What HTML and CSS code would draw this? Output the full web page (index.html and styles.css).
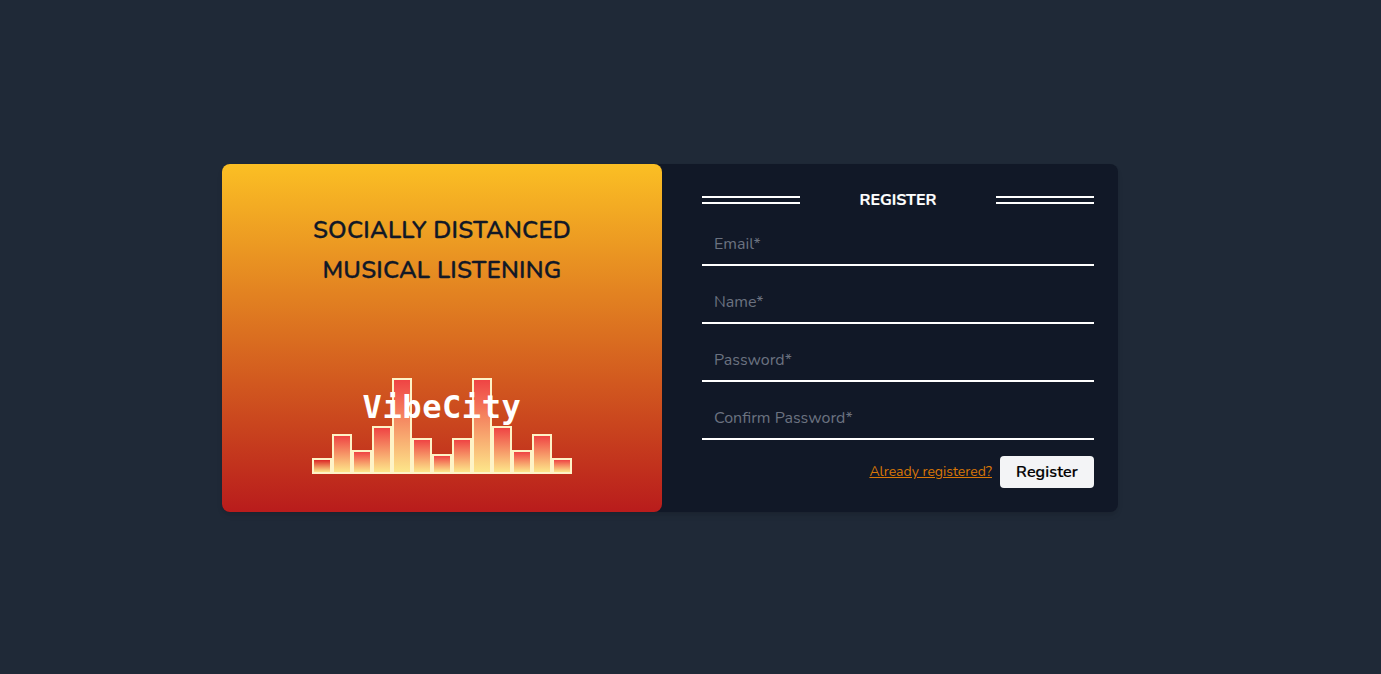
FILE: index.html
```html
<!DOCTYPE html>
<html lang="en">
<head>
<meta charset="utf-8">
<title>VibeCity - Register</title>
<link rel="stylesheet" href="styles.css">
</head>
<body>
<main class="card">
  <section class="promo">
    <h1 class="tagline">SOCIALLY DISTANCED<br>MUSICAL LISTENING</h1>
    <div class="logo">
      <div class="bars">
        <i class="bar h4 deep"></i><i class="bar h10"></i><i class="bar h6"></i><i class="bar h12"></i><i class="bar h24"></i><i class="bar h9"></i><i class="bar h5"></i><i class="bar h9"></i><i class="bar h24"></i><i class="bar h12"></i><i class="bar h6"></i><i class="bar h10"></i><i class="bar h4"></i>
      </div>
      <span class="brand">VibeCity</span>
    </div>
  </section>
  <form class="form">
    <div class="heading"><span class="rule"></span><h2 class="title">REGISTER</h2><span class="rule"></span></div>
    <input class="field" type="email" placeholder="Email*" aria-label="Email">
    <input class="field" type="text" placeholder="Name*" aria-label="Name">
    <input class="field" type="password" placeholder="Password*" aria-label="Password">
    <input class="field" type="password" placeholder="Confirm Password*" aria-label="Confirm password">
    <div class="actions"><a class="link" href="#">Already registered?</a><button class="submit" type="button">Register</button></div>
  </form>
</main>
</body>
</html>
```
FILE: styles.css
```css
* { box-sizing: border-box; }
body {
  margin: 0;
  height: 100vh;
  overflow: hidden;
  background: #1f2937;
  font-family: Nunito, Lato, sans-serif;
  font-size: 16px;
  line-height: 24px;
}
.card {
  display: flex;
  width: 896px;
  height: 348px;
  margin: 164px 0 0 222px;
  border-radius: 8px;
  background: #111827;
  box-shadow: 0 4px 6px -1px rgba(0, 0, 0, .1), 0 2px 4px -1px rgba(0, 0, 0, .06);
}
.promo {
  display: flex;
  flex-direction: column;
  align-items: center;
  justify-content: space-between;
  width: 440px;
  padding: 46px 0 38px;
  border-radius: 8px;
  background: linear-gradient(to bottom, #fbbf24, #b91c1c);
}
.tagline {
  margin: 0;
  color: #111827;
  font-size: 24px;
  font-weight: 600;
  line-height: 40px;
  letter-spacing: .22px;
  text-align: center;
  -webkit-text-stroke: .3px #111827;
}
.logo { position: relative; }
.bars { display: flex; align-items: flex-end; }
.bar {
  width: 20px;
  border: 2px solid #fef3c7;
  background: linear-gradient(to bottom, #ef4444, #fde68a);
}
.deep { background: linear-gradient(to bottom, #dc2626, #fde68a); }
.h4 { height: 16px; }
.h5 { height: 20px; }
.h6 { height: 24px; }
.h9 { height: 36px; }
.h10 { height: 40px; }
.h12 { height: 48px; }
.h24 { height: 96px; }
.brand {
  position: absolute;
  top: 9px;
  left: 0;
  width: 100%;
  color: #fff;
  font: bold 32px/40px "DejaVu Sans Mono", monospace;
  letter-spacing: .6px;
  text-align: center;
}
.form {
  display: flex;
  flex: 1;
  flex-direction: column;
  padding: 24px 24px 24px 40px;
}
.heading {
  display: flex;
  align-items: center;
  justify-content: space-between;
  height: 24px;
}
.rule {
  width: 98px;
  height: 8px;
  border: solid #fff;
  border-width: 2px 0;
}
.title {
  margin: 0;
  color: #fff;
  font-size: 16px;
  font-weight: 700;
  -webkit-text-stroke: .2px #fff;
}
.field {
  width: 100%;
  height: 42px;
  margin: 12px 0 4px;
  padding: 0 12px;
  border: 0;
  border-bottom: 2px solid #fff;
  outline: 0;
  background: transparent;
  color: #fff;
  font: inherit;
}
.field::placeholder { color: #6b7280; opacity: 1; }
.actions {
  display: flex;
  align-items: center;
  justify-content: flex-end;
  gap: 8px;
  height: 32px;
  margin-top: 12px;
}
.link { color: #d97706; font-size: 14px; line-height: 20px; }
.submit {
  width: 94px;
  height: 32px;
  padding: 0;
  border: 0;
  border-radius: 4px;
  background: #f3f4f6;
  color: #000;
  font: 600 16px/24px Nunito, Lato, sans-serif;
  letter-spacing: .15px;
  -webkit-text-stroke: .2px #000;
}
```
